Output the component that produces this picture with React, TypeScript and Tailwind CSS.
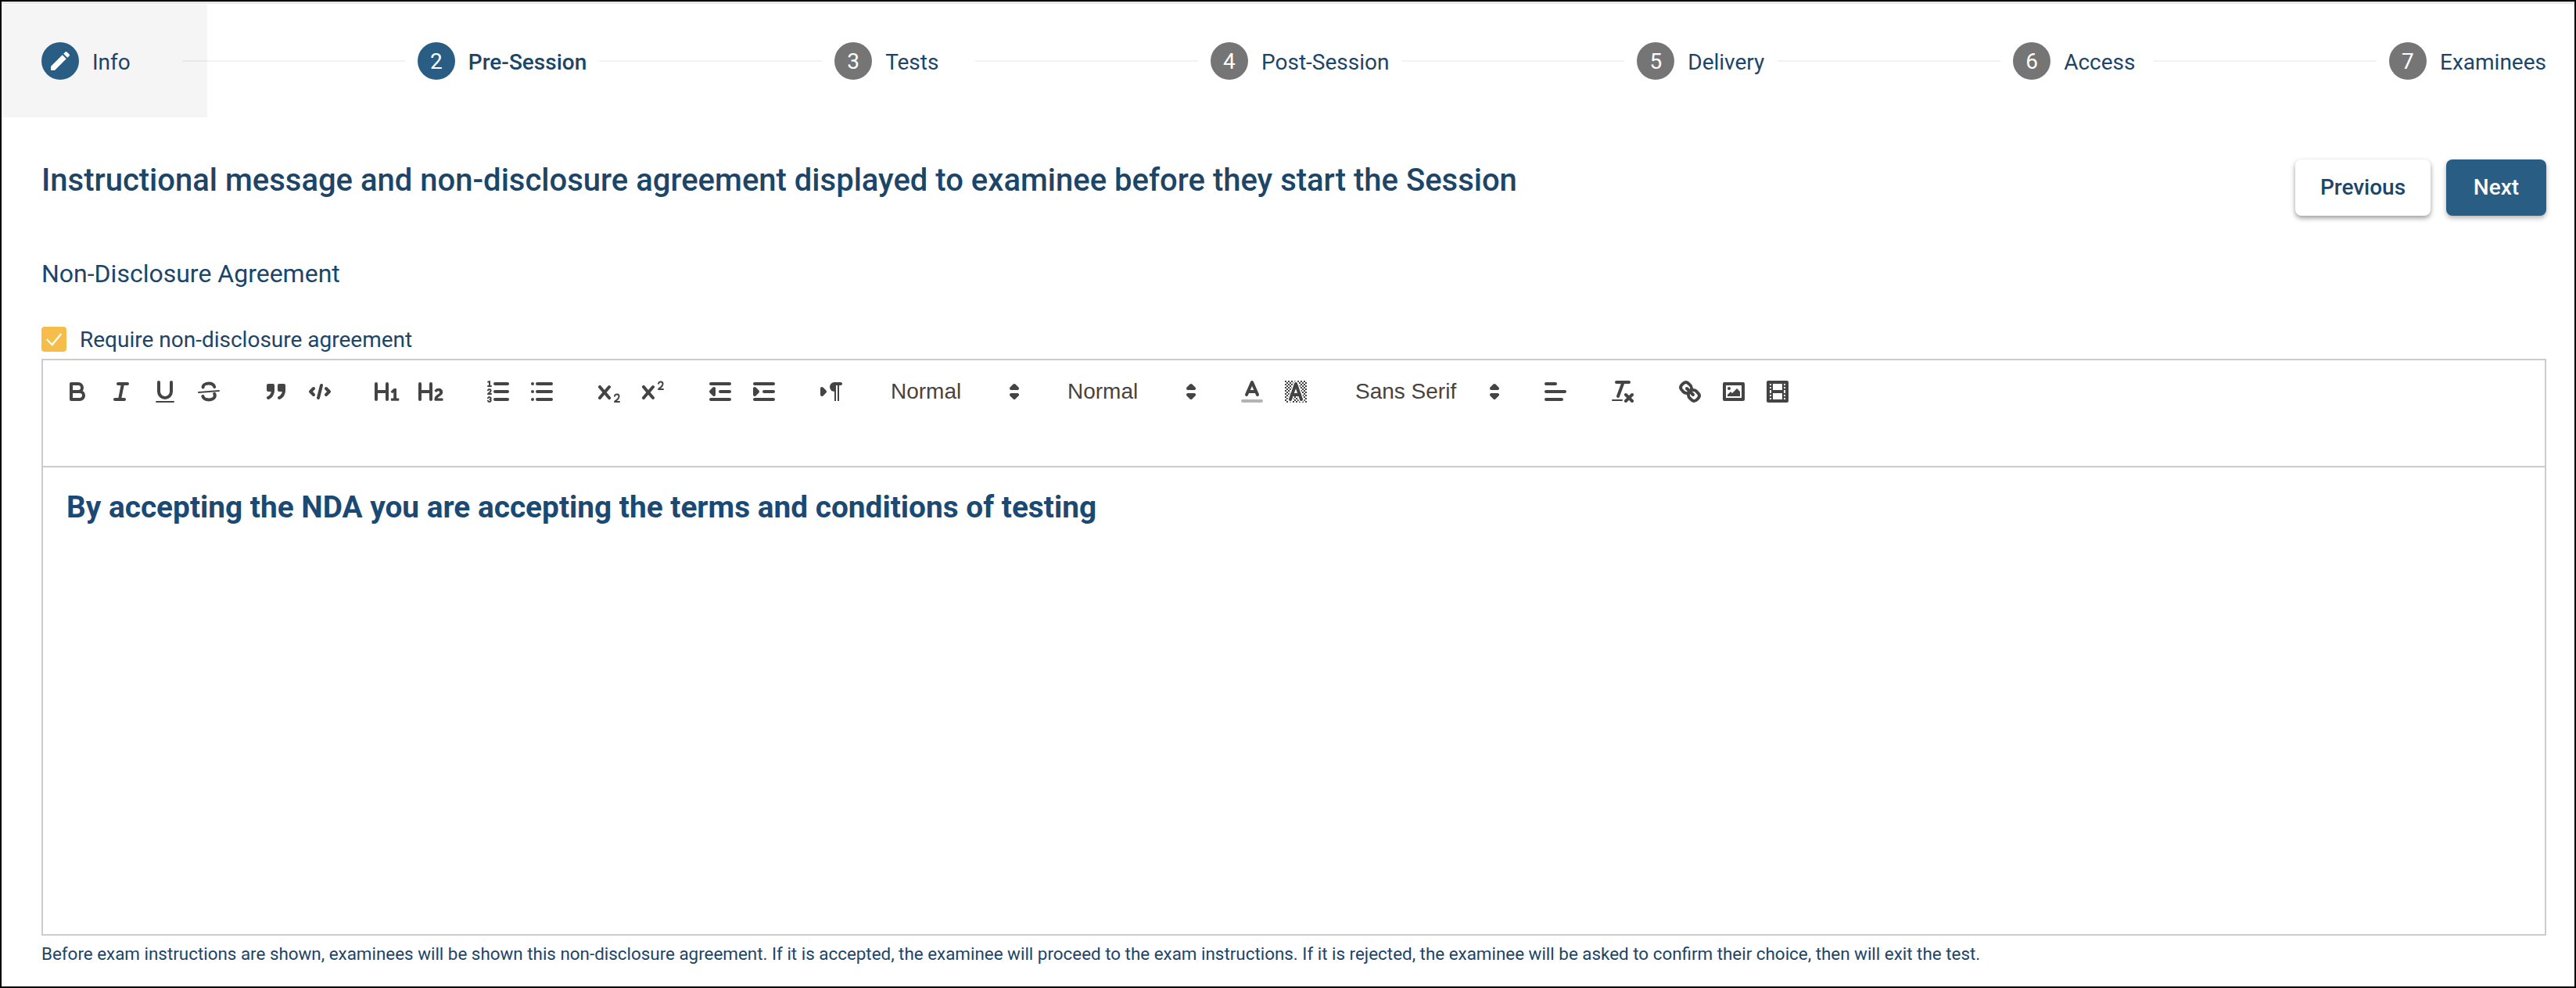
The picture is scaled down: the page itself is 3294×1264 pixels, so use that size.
import { Fragment, ReactNode } from 'react';

const steps = ['Info', 'Pre-Session', 'Tests', 'Post-Session', 'Delivery', 'Access', 'Examinees'];

const S = 'fill-none stroke-[#444] stroke-2 [stroke-linecap:round] [stroke-linejoin:round]';
const T = 'fill-none stroke-[#444] stroke-1 [stroke-linecap:round] [stroke-linejoin:round]';
const F = 'fill-[#444]';
const SF = 'fill-[#444] stroke-[#444] stroke-2 [stroke-linecap:round] [stroke-linejoin:round]';

function Icon({ children }: { children: ReactNode }) {
  return (
    <button className="flex h-12 w-14 shrink-0 items-center justify-center">
      <svg viewBox="0 0 18 18" className="h-9 w-9">
        {children}
      </svg>
    </button>
  );
}

function Picker({ label, width }: { label: string; width: string }) {
  return (
    <div className={`relative flex h-12 shrink-0 items-center pl-[18px] text-[28px] text-[#444] [font-family:'Liberation_Sans',sans-serif] ${width}`}>
      {label}
      <svg viewBox="0 0 18 18" className="absolute right-0.5 top-1.5 h-9 w-9">
        <polygon className={SF} points="7 11 9 13 11 11 7 11" />
        <polygon className={SF} points="7 7 9 5 11 7 7 7" />
      </svg>
    </div>
  );
}

function Group({ children }: { children: ReactNode }) {
  return <div className="flex shrink-0">{children}</div>;
}

function Toolbar() {
  return (
    <div className="flex h-[137px] gap-[30px] border-b-2 border-[#ccc] px-4 pt-4">
      <Group>
        <Icon>
          <path className={S} d="M5,4H9.5A2.5,2.5,0,0,1,12,6.5v0A2.5,2.5,0,0,1,9.5,9H5A0,0,0,0,1,5,9V4A0,0,0,0,1,5,4Z" />
          <path className={S} d="M5,9h5.5A2.5,2.5,0,0,1,13,11.5v0A2.5,2.5,0,0,1,10.5,14H5a0,0,0,0,1,0,0V9A0,0,0,0,1,5,9Z" />
        </Icon>
        <Icon>
          <line className={S} x1="7" x2="13" y1="4" y2="4" />
          <line className={S} x1="5" x2="11" y1="14" y2="14" />
          <line className={S} x1="8" x2="10" y1="14" y2="4" />
        </Icon>
        <Icon>
          <path className={S} d="M5,3V9a4.012,4.012,0,0,0,4,4H9a4.012,4.012,0,0,0,4-4V3" />
          <rect className={F} height="1" rx=".5" ry=".5" width="12" x="3" y="15" />
        </Icon>
        <Icon>
          <line className={T} x1="15.5" x2="2.5" y1="8.5" y2="9.5" />
          <path className={S} d="M12.6,6C12.2,4.6 10.8,3.8 9,3.8C7,3.8 5.3,4.7 5.3,6.2" />
          <path className={S} d="M5.2,12C5.6,13.4 7.2,14.2 9,14.2C11,14.2 12.9,13.3 12.9,11.5C12.9,11 12.8,10.7 12.6,10.4" />
        </Icon>
      </Group>
      <Group>
        <Icon>
          <rect className={SF} height="3" width="3" x="4" y="5" />
          <rect className={SF} height="3" width="3" x="11" y="5" />
          <path className={S} d="M7,8c0,4.031-3,5-3,5" />
          <path className={S} d="M14,8c0,4.031-3,5-3,5" />
        </Icon>
        <Icon>
          <polyline className={S} points="5 7 3 9 5 11" />
          <polyline className={S} points="13 7 15 9 13 11" />
          <line className={S} x1="10" x2="8" y1="5" y2="13" />
        </Icon>
      </Group>
      <Group>
        <Icon>
          <path className={F} d="M10,4V14a1,1,0,0,1-2,0V10H3v4a1,1,0,0,1-2,0V4A1,1,0,0,1,3,4V8H8V4a1,1,0,0,1,2,0Zm6.06787,9.209H14.98975V7.59863a.54085.54085,0,0,0-.605-.60547h-.62744a1.01119,1.01119,0,0,0-.748.29688L11.645,8.56641a.5435.5435,0,0,0-.022.8584l.28613.30762a.53861.53861,0,0,0,.84717.0332l.09912-.08789a1.2137,1.2137,0,0,0,.2417-.35254h.02246s-.01123.30859-.01123.60547V13.209H12.041a.54085.54085,0,0,0-.605.60547v.43945a.54085.54085,0,0,0,.605.60547h4.02686a.54085.54085,0,0,0,.605-.60547v-.43945A.54085.54085,0,0,0,16.06787,13.209Z" />
        </Icon>
        <Icon>
          <path className={F} d="M16.73975,13.81445v.43945a.54085.54085,0,0,1-.605.60547H11.855a.58392.58392,0,0,1-.64893-.60547V14.0127c0-2.90527,3.39941-3.42187,3.39941-4.55469a.77675.77675,0,0,0-.84717-.78125,1.17684,1.17684,0,0,0-.83594.38477c-.2749.26367-.561.374-.85791.13184l-.4292-.34082c-.30811-.24219-.38525-.51758-.1543-.81445a2.97155,2.97155,0,0,1,2.45361-1.17676,2.45393,2.45393,0,0,1,2.68408,2.40918c0,2.45312-3.1792,2.92676-3.27832,3.93848h2.79443A.54085.54085,0,0,1,16.73975,13.81445ZM9,3A.99974.99974,0,0,0,8,4V8H3V4A1,1,0,0,0,1,4V14a1,1,0,0,0,2,0V10H8v4a1,1,0,0,0,2,0V4A.99974.99974,0,0,0,9,3Z" />
        </Icon>
      </Group>
      <Group>
        <Icon>
          <line className={S} x1="7" x2="15" y1="4" y2="4" />
          <line className={S} x1="7" x2="15" y1="9" y2="9" />
          <line className={S} x1="7" x2="15" y1="14" y2="14" />
          <line className={T} x1="2.5" x2="4.5" y1="5.5" y2="5.5" />
          <path className={F} d="M3.5,6A0.5,0.5,0,0,1,3,5.5V3.085l-0.276.138A0.5,0.5,0,0,1,2.053,3c-0.124-.247-0.023-0.324.224-0.447l1-.5A0.5,0.5,0,0,1,4,2.5v3A0.5,0.5,0,0,1,3.5,6Z" />
          <path className={T} d="M4.5,10.5h-2c0-.234,1.85-1.076,1.85-2.234A0.959,0.959,0,0,0,2.5,8.156" />
          <path className={T} d="M2.5,14.846a0.959,0.959,0,0,0,1.85-.109A0.7,0.7,0,0,0,3.75,14a0.688,0.688,0,0,0,.6-0.736,0.959,0.959,0,0,0-1.85-.109" />
        </Icon>
        <Icon>
          <line className={S} x1="6" x2="15" y1="4" y2="4" />
          <line className={S} x1="6" x2="15" y1="9" y2="9" />
          <line className={S} x1="6" x2="15" y1="14" y2="14" />
          <line className={S} x1="3" x2="3" y1="4" y2="4" />
          <line className={S} x1="3" x2="3" y1="9" y2="9" />
          <line className={S} x1="3" x2="3" y1="14" y2="14" />
        </Icon>
      </Group>
      <Group>
        <Icon>
          <path className={F} d="M15.5,15H13.861a3.858,3.858,0,0,0,1.914-2.975,1.8,1.8,0,0,0-1.6-1.751A1.921,1.921,0,0,0,12.021,11.7a0.50013,0.50013,0,1,0,.957.291h0a0.914,0.914,0,0,1,1.053-.725,0.81,0.81,0,0,1,.744.762c0,1.076-1.16971,1.86982-1.93971,2.43082A1.45639,1.45639,0,0,0,12,15.5a0.5,0.5,0,0,0,.5.5h3A0.5,0.5,0,0,0,15.5,15Z" />
          <path className={F} d="M9.65,5.241a1,1,0,0,0-1.409.108L6,7.964,3.759,5.349A1,1,0,0,0,2.192,6.59178Q2.21541,6.6213,2.241,6.649L4.684,9.5,2.241,12.35A1,1,0,0,0,3.71,13.70722q0.02557-.02768.049-0.05722L6,11.036,8.241,13.65a1,1,0,1,0,1.567-1.24277Q9.78459,12.3777,9.759,12.35L7.316,9.5,9.759,6.651A1,1,0,0,0,9.65,5.241Z" />
        </Icon>
        <Icon>
          <path className={F} d="M15.5,7H13.861a4.015,4.015,0,0,0,1.914-2.975,1.8,1.8,0,0,0-1.6-1.751A1.922,1.922,0,0,0,12.021,3.7a0.5,0.5,0,1,0,.957.291,0.917,0.917,0,0,1,1.053-.725,0.81,0.81,0,0,1,.744.762c0,1.077-1.164,1.925-1.934,2.486A1.423,1.423,0,0,0,12,7.5a0.5,0.5,0,0,0,.5.5h3A0.5,0.5,0,0,0,15.5,7Z" />
          <path className={F} d="M9.651,5.241a1,1,0,0,0-1.41.108L6,7.964,3.759,5.349a1,1,0,1,0-1.519,1.3L4.683,9.5,2.241,12.35a1,1,0,1,0,1.519,1.3L6,11.036l2.241,2.614a1,1,0,0,0,1.519-1.3L7.317,9.5,9.759,6.651A1,1,0,0,0,9.651,5.241Z" />
        </Icon>
      </Group>
      <Group>
        <Icon>
          <line className={S} x1="3" x2="15" y1="14" y2="14" />
          <line className={S} x1="3" x2="15" y1="4" y2="4" />
          <line className={S} x1="9" x2="15" y1="9" y2="9" />
          <polyline className={SF} points="5 7 5 11 3 9 5 7" />
        </Icon>
        <Icon>
          <line className={S} x1="3" x2="15" y1="14" y2="14" />
          <line className={S} x1="3" x2="15" y1="4" y2="4" />
          <line className={S} x1="9" x2="15" y1="9" y2="9" />
          <polyline className={SF} points="3 7 3 11 5 9 3 7" />
        </Icon>
      </Group>
      <Group>
        <Icon>
          <polygon className={SF} points="3 11 5 9 3 7 3 11" />
          <line className={S} x1="15" x2="11" y1="4" y2="4" />
          <path className={F} d="M11,3a3,3,0,0,0,0,6h1V3H11Z" />
          <rect className={F} height="11" width="1" x="11" y="4" />
          <rect className={F} height="11" width="1" x="13" y="4" />
        </Icon>
      </Group>
      <Picker label="Normal" width="w-[196px]" />
      <Picker label="Normal" width="w-[196px]" />
      <Group>
        <Icon>
          <line className="fill-none stroke-[#b4b4b4] stroke-2 [stroke-linecap:round]" x1="3" x2="15" y1="15" y2="15" />
          <polyline className={S} points="5.5 11 9 3 12.5 11" />
          <line className={S} x1="11.63" x2="6.38" y1="9" y2="9" />
        </Icon>
        <Icon>
          <defs>
            <pattern id="dither" width="2" height="2" patternUnits="userSpaceOnUse">
              <rect width="1" height="1" fill="#444" />
              <rect x="1" y="1" width="1" height="1" fill="#444" />
            </pattern>
          </defs>
          <rect x="2" y="2" width="14" height="14" fill="url(#dither)" />
          <polyline className="fill-none stroke-white stroke-[3.5] [stroke-linecap:round] [stroke-linejoin:round]" points="5.5 14 9 4 12.5 14" />
          <polyline className={S} points="5.5 14 9 4 12.5 14" />
          <line className={S} x1="11.63" x2="6.38" y1="11" y2="11" />
        </Icon>
      </Group>
      <Picker label="Sans Serif" width="w-[216px]" />
      <Group>
        <Icon>
          <line className={S} x1="3" x2="15" y1="9" y2="9" />
          <line className={S} x1="3" x2="13" y1="14" y2="14" />
          <line className={S} x1="3" x2="9" y1="4" y2="4" />
        </Icon>
      </Group>
      <Group>
        <Icon>
          <line className={S} x1="5" x2="13" y1="3" y2="3" />
          <line className={S} x1="6" x2="9.35" y1="12" y2="3" />
          <line className={S} x1="11" x2="15" y1="11" y2="15" />
          <line className={S} x1="15" x2="11" y1="11" y2="15" />
          <rect className={F} height="1" rx=".5" ry=".5" width="7" x="2" y="14" />
        </Icon>
      </Group>
      <Group>
        <Icon>
          <line className={S} x1="7" x2="11" y1="7" y2="11" />
          <path className={S} d="M8.9,4.577a3.476,3.476,0,0,1,.36,4.679A3.476,3.476,0,0,1,4.577,8.9C3.185,7.5,2.035,6.4,4.217,4.217S7.5,3.185,8.9,4.577Z" />
          <path className={S} d="M13.423,9.1a3.476,3.476,0,0,0-4.679-.36,3.476,3.476,0,0,0,.36,4.679c1.392,1.392,2.5,2.542,4.679.36S14.815,10.5,13.423,9.1Z" />
        </Icon>
        <Icon>
          <rect className={S} height="10" width="12" x="3" y="4" />
          <circle className={F} cx="6" cy="7" r="1" />
          <polyline className={F} points="5 12 5 11 7 9 8 10 11 7 13 9 13 12 5 12" />
        </Icon>
        <Icon>
          <rect className={S} height="12" width="12" x="3" y="3" />
          <rect className={F} height="12" width="1" x="5" y="3" />
          <rect className={F} height="12" width="1" x="12" y="3" />
          <rect className={F} height="2" width="8" x="5" y="8" />
          <rect className={F} height="1" width="3" x="3" y="5" />
          <rect className={F} height="1" width="3" x="3" y="7" />
          <rect className={F} height="1" width="3" x="3" y="10" />
          <rect className={F} height="1" width="3" x="3" y="12" />
          <rect className={F} height="1" width="3" x="12" y="5" />
          <rect className={F} height="1" width="3" x="12" y="7" />
          <rect className={F} height="1" width="3" x="12" y="10" />
          <rect className={F} height="1" width="3" x="12" y="12" />
        </Icon>
      </Group>
    </div>
  );
}

function Stepper() {
  return (
    <div className="flex items-center">
      {steps.map((label, i) => (
        <Fragment key={label}>
          <div className={`relative flex items-center gap-[17px] ${i === steps.length - 1 ? '' : 'min-w-[164px]'}`}>
            {i === 0 && <div className="absolute left-[-51px] top-[-48px] h-[144px] w-[263px] bg-[#f5f5f5]" />}
            <div
              className={`relative flex h-12 w-12 shrink-0 items-center justify-center rounded-full text-[28px] text-white ${
                i < 2 ? 'bg-[#2a5d84]' : 'bg-[#757575]'
              } ${i === 0 ? '' : 'pt-0.5'}`}
            >
              {i === 0 ? (
                <svg viewBox="0 0 24 24" className="h-8 w-8 fill-white">
                  <path d="M3 17.25V21h3.75L17.81 9.94l-3.75-3.75L3 17.25zM20.71 7.04c.39-.39.39-1.02 0-1.41l-2.34-2.34a.9959.9959 0 0 0-1.41 0l-1.83 1.83 3.75 3.75 1.83-1.83z" />
                </svg>
              ) : (
                i + 1
              )}
            </div>
            <span className={`relative top-0.5 text-[28px] leading-[40px] ${i === 1 ? 'font-medium' : ''}`}>{label}</span>
          </div>
          {i < steps.length - 1 && <div className="relative mx-4 h-0.5 flex-1 bg-black/5" />}
        </Fragment>
      ))}
    </div>
  );
}

export default function App() {
  return (
    <div className="h-[1264px] overflow-hidden border-2 border-black bg-white text-[#1c4568] [font-family:Roboto,sans-serif]">
      <div className="h-[3px] bg-[#e8e8e8]" />
      <div className="pl-[51px] pr-9 pt-[49px]">
        <Stepper />
        <div className="mt-[102px] flex items-start justify-between">
          <h1 className="text-[40px] font-medium leading-[54px]">
            Instructional message and non-disclosure agreement displayed to examinee before they start the Session
          </h1>
          <div className="flex gap-5">
            <button className="h-[72px] w-[173px] rounded-lg bg-white text-[28px] font-medium shadow-[0_3px_6px_rgba(0,0,0,0.4)]">
              Previous
            </button>
            <button className="h-[72px] w-[128px] rounded-lg bg-[#2a5d84] text-[28px] font-medium text-white shadow-[0_3px_6px_rgba(0,0,0,0.3)]">
              Next
            </button>
          </div>
        </div>
        <div className="mt-[52px] text-[32px] leading-[44px]">Non-Disclosure Agreement</div>
        <label className="mt-[46px] flex h-8 items-center gap-[17px] text-[28px]">
          <span className="flex h-8 w-8 items-center justify-center rounded bg-[#f6bd4b]">
            <svg viewBox="0 0 24 24" className="h-7 w-7 fill-none stroke-white stroke-2">
              <polyline points="4 12 10 18 20 6" />
            </svg>
          </span>
          <span className="relative top-px">Require non-disclosure agreement</span>
        </label>
        <div className="mt-[9px] h-[738px] border-2 border-[#ccc]">
          <Toolbar />
          <div className="px-[30px] py-6 text-[38.8px] font-bold leading-[54px] text-[#1a4a74]">
            By accepting the NDA you are accepting the terms and conditions of testing
          </div>
        </div>
        <p className="mt-[7px] text-[22.4px] leading-8">
          Before exam instructions are shown, examinees will be shown this non-disclosure agreement. If it is accepted, the examinee will proceed to the exam instructions. If it is rejected, the examinee will be asked to confirm their choice, then will exit the test.
        </p>
      </div>
    </div>
  );
}
